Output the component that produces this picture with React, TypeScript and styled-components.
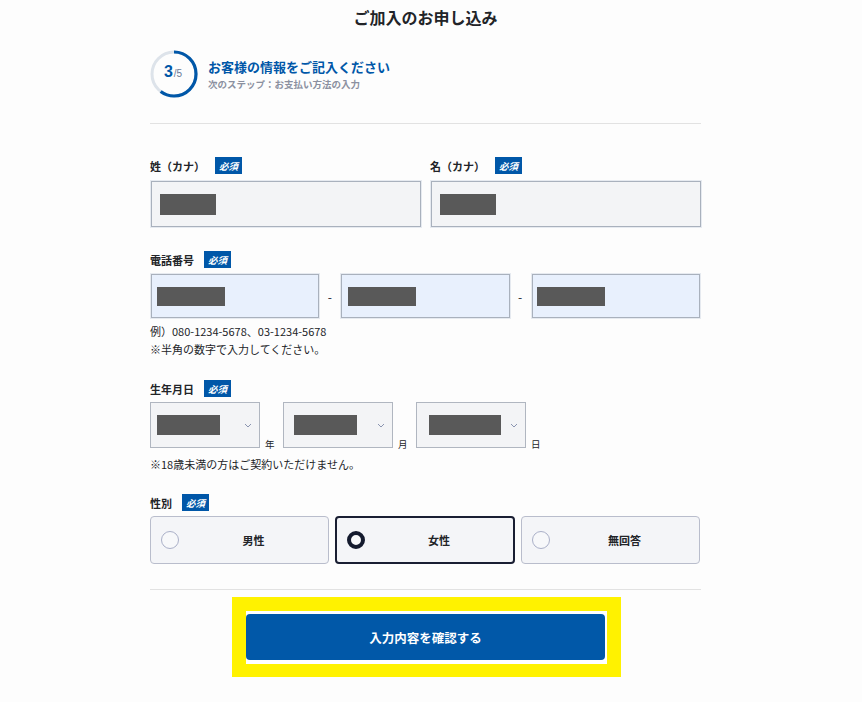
import React from 'react';
import styled, { createGlobalStyle } from 'styled-components';

const GlobalStyle = createGlobalStyle`
  html, body {
    margin: 0;
    padding: 0;
    background: #fdfdfd;
  }
  body {
    font-family: "Noto Sans CJK JP", "Noto Sans", "Liberation Sans", sans-serif;
    color: #222428;
  }
`;

const BLUE = '#0057a8';

const Page = styled.div`
  padding-left: 150px;
`;

const Column = styled.div`
  width: 551px;
  padding-top: 6px;
  padding-bottom: 24px;
`;

const PageTitle = styled.h1`
  margin: 0;
  font-size: 16px;
  line-height: 22px;
  font-weight: 700;
  text-align: center;
  color: #222428;
`;

const StepRow = styled.div`
  display: flex;
  align-items: center;
  gap: 10px;
  margin-top: 22px;
`;

const StepCircle = styled.div`
  position: relative;
  width: 48px;
  height: 48px;
  flex-shrink: 0;

  svg {
    display: block;
  }
`;

const StepCount = styled.div`
  position: absolute;
  inset: 0;
  display: flex;
  align-items: baseline;
  justify-content: center;
  padding-top: 13px;
  padding-right: 2px;
  box-sizing: border-box;
  font-family: "Liberation Sans", sans-serif;
  color: ${BLUE};

  b {
    font-size: 16px;
    line-height: 18px;
  }
  span {
    font-size: 10px;
    color: #6a7a96;
    margin-left: 1px;
  }
`;

const StepText = styled.div`
  display: flex;
  flex-direction: column;
  gap: 3px;
  margin-top: 0;
`;

const StepTitle = styled.div`
  font-size: 13px;
  line-height: 17px;
  font-weight: 700;
  color: ${BLUE};
`;

const StepNext = styled.div`
  font-size: 9.5px;
  line-height: 13px;
  font-weight: 700;
  color: #8b90a0;
`;

const Divider = styled.hr<{ $top: number }>`
  border: none;
  border-top: 1px solid #e2e2e2;
  margin: ${(p) => p.$top}px 0 0;
`;

const Section = styled.div<{ $top: number }>`
  margin-top: ${(p) => p.$top}px;
`;

const LabelRow = styled.div`
  display: flex;
  align-items: center;
  gap: 10px;
  height: 17px;
`;

const Label = styled.span`
  font-size: 11px;
  font-weight: 700;
  color: #222428;
`;

const Badge = styled.span`
  display: inline-flex;
  align-items: center;
  justify-content: center;
  width: 27px;
  height: 17px;
  background: ${BLUE};
  color: #fff;
  font-size: 9.5px;
  font-weight: 700;
  font-style: italic;
`;

const NameGrid = styled.div`
  display: grid;
  grid-template-columns: 1fr 1fr;
  gap: 9px;
`;

const FieldGroup = styled.div`
  display: flex;
  flex-direction: column;
  gap: 7px;
`;

const TextField = styled.div<{ $tone: 'gray' | 'blue'; $h: number; $pad: number }>`
  display: flex;
  align-items: center;
  box-sizing: border-box;
  height: ${(p) => p.$h}px;
  margin-left: 1px;
  padding-left: ${(p) => p.$pad}px;
  background: ${(p) => (p.$tone === 'blue' ? '#e8f0fd' : '#f3f4f6')};
  border: 1.5px solid #a9b1bd;
  box-shadow: 0 0 0 1px #e6eaf0;
`;

const Redacted = styled.span<{ $w: number; $h: number }>`
  display: block;
  width: ${(p) => p.$w}px;
  height: ${(p) => p.$h}px;
  background: #595959;
`;

const PhoneGrid = styled.div`
  display: grid;
  grid-template-columns: 1fr 21px 1fr 21px 1fr;
  align-items: center;
  margin-top: 6px;
  width: 550px;
`;

const Dash = styled.span`
  text-align: center;
  font-size: 12px;
  color: #1a2030;
`;

const Hint = styled.p<{ $top: number }>`
  margin: ${(p) => p.$top}px 0 0;
  font-size: 11px;
  line-height: 18px;
  color: #222428;
`;

const DateRow = styled.div`
  display: flex;
  margin-top: 5px;
`;

const DatePart = styled.div`
  display: flex;
  align-items: flex-end;
  gap: 5px;
  width: 133px;
`;

const Select = styled.div<{ $pad: number }>`
  display: flex;
  align-items: center;
  box-sizing: border-box;
  width: 110px;
  height: 46px;
  padding: 0 7px 0 ${(p) => p.$pad}px;
  background: #f3f4f6;
  border: 1.5px solid #b0b6c0;

  svg {
    display: block;
    margin-left: auto;
  }
`;

const Unit = styled.span`
  font-size: 9.5px;
  line-height: 12px;
  color: #222428;
  margin-bottom: -2px;
`;

const RadioGrid = styled.div`
  display: grid;
  grid-template-columns: 179px 180px 179px;
  gap: 6px;
  margin-top: 5px;
`;

const RadioOption = styled.div<{ $checked: boolean }>`
  display: flex;
  align-items: center;
  box-sizing: border-box;
  height: 48px;
  padding-left: 10px;
  background: #f4f5f8;
  border: ${(p) => (p.$checked ? '2px solid #1a1f33' : '1px solid #b9bdcc')};
  border-radius: 4px;
`;

const RadioDot = styled.span<{ $checked: boolean }>`
  box-sizing: border-box;
  width: 18px;
  height: 18px;
  border-radius: 50%;
  flex-shrink: 0;
  background: #f7f8fa;
  border: ${(p) => (p.$checked ? '4.5px solid #141a2e' : '1px solid #aab0c8')};
`;

const RadioText = styled.span`
  flex: 1;
  text-align: center;
  font-size: 11px;
  font-weight: 700;
  color: #222428;
`;

const SubmitArea = styled.div`
  display: flex;
  justify-content: center;
  margin-top: 7px;
  padding-left: 2px;
`;

const Highlight = styled.div`
  padding: 14px 14px 13px 14px;
  background: #fff200;
`;

const ButtonFrame = styled.div`
  padding: 3px 2px 4px 0;
  background: #fff;
`;

const SubmitButton = styled.button`
  display: block;
  width: 359px;
  height: 46px;
  border: none;
  border-radius: 4px;
  background: #0158a8;
  color: #fff;
  font-family: inherit;
  font-size: 12.5px;
  font-weight: 700;
  cursor: pointer;
`;

function StepRing() {
  const r = 22;
  const c = 2 * Math.PI * r;
  const done = c * 0.6;
  return (
    <svg width="48" height="48" viewBox="0 0 48 48">
      <circle cx="24" cy="24" r={r} fill="none" stroke="#dde3ea" strokeWidth="3" />
      <circle
        cx="24"
        cy="24"
        r={r}
        fill="none"
        stroke={BLUE}
        strokeWidth="3.2"
        strokeDasharray={`${done} ${c}`}
        transform="rotate(-90 24 24)"
      />
    </svg>
  );
}

function Chevron() {
  return (
    <svg width="8" height="5" viewBox="0 0 8 5">
      <path d="M1 1l3 3 3-3" fill="none" stroke="#8a94b0" strokeWidth="1" />
    </svg>
  );
}

const dateParts = [
  { unit: '年', w: 63, pad: 6 },
  { unit: '月', w: 63, pad: 10 },
  { unit: '日', w: 72, pad: 12 }
];

const genders = [
  { label: '男性', checked: false },
  { label: '女性', checked: true },
  { label: '無回答', checked: false }
];

export default function App() {
  return (
    <Page>
      <GlobalStyle />
      <Column>
        <PageTitle>ご加入のお申し込み</PageTitle>

        <StepRow>
          <StepCircle>
            <StepRing />
            <StepCount>
              <b>3</b>
              <span>/5</span>
            </StepCount>
          </StepCircle>
          <StepText>
            <StepTitle>お客様の情報をご記入ください</StepTitle>
            <StepNext>次のステップ：お支払い方法の入力</StepNext>
          </StepText>
        </StepRow>

        <Divider $top={25} />

        <Section $top={33}>
          <NameGrid>
            <FieldGroup>
              <LabelRow>
                <Label>姓（カナ）</Label>
                <Badge>必須</Badge>
              </LabelRow>
              <TextField $tone="gray" $h={46} $pad={8}>
                <Redacted $w={56} $h={21} />
              </TextField>
            </FieldGroup>
            <FieldGroup>
              <LabelRow>
                <Label>名（カナ）</Label>
                <Badge>必須</Badge>
              </LabelRow>
              <TextField $tone="gray" $h={46} $pad={8}>
                <Redacted $w={56} $h={21} />
              </TextField>
            </FieldGroup>
          </NameGrid>
        </Section>

        <Section $top={24}>
          <LabelRow>
            <Label>電話番号</Label>
            <Badge>必須</Badge>
          </LabelRow>
          <PhoneGrid>
            <TextField $tone="blue" $h={44} $pad={5}>
              <Redacted $w={68} $h={19} />
            </TextField>
            <Dash>-</Dash>
            <TextField $tone="blue" $h={44} $pad={6}>
              <Redacted $w={68} $h={19} />
            </TextField>
            <Dash>-</Dash>
            <TextField $tone="blue" $h={44} $pad={4}>
              <Redacted $w={68} $h={19} />
            </TextField>
          </PhoneGrid>
          <Hint $top={4}>
            例）080-1234-5678、03-1234-5678
            <br />
            ※半角の数字で入力してください。
          </Hint>
        </Section>

        <Section $top={22}>
          <LabelRow>
            <Label>生年月日</Label>
            <Badge>必須</Badge>
          </LabelRow>
          <DateRow>
            {dateParts.map((d) => (
              <DatePart key={d.unit}>
                <Select $pad={d.pad}>
                  <Redacted $w={d.w} $h={20} />
                  <Chevron />
                </Select>
                <Unit>{d.unit}</Unit>
              </DatePart>
            ))}
          </DateRow>
          <Hint $top={7}>※18歳未満の方はご契約いただけません。</Hint>
        </Section>

        <Section $top={21}>
          <LabelRow>
            <Label>性別</Label>
            <Badge>必須</Badge>
          </LabelRow>
          <RadioGrid>
            {genders.map((g) => (
              <RadioOption key={g.label} $checked={g.checked}>
                <RadioDot $checked={g.checked} />
                <RadioText>{g.label}</RadioText>
              </RadioOption>
            ))}
          </RadioGrid>
        </Section>

        <Divider $top={25} />

        <SubmitArea>
          <Highlight>
            <ButtonFrame>
              <SubmitButton type="button">入力内容を確認する</SubmitButton>
            </ButtonFrame>
          </Highlight>
        </SubmitArea>
      </Column>
    </Page>
  );
}
